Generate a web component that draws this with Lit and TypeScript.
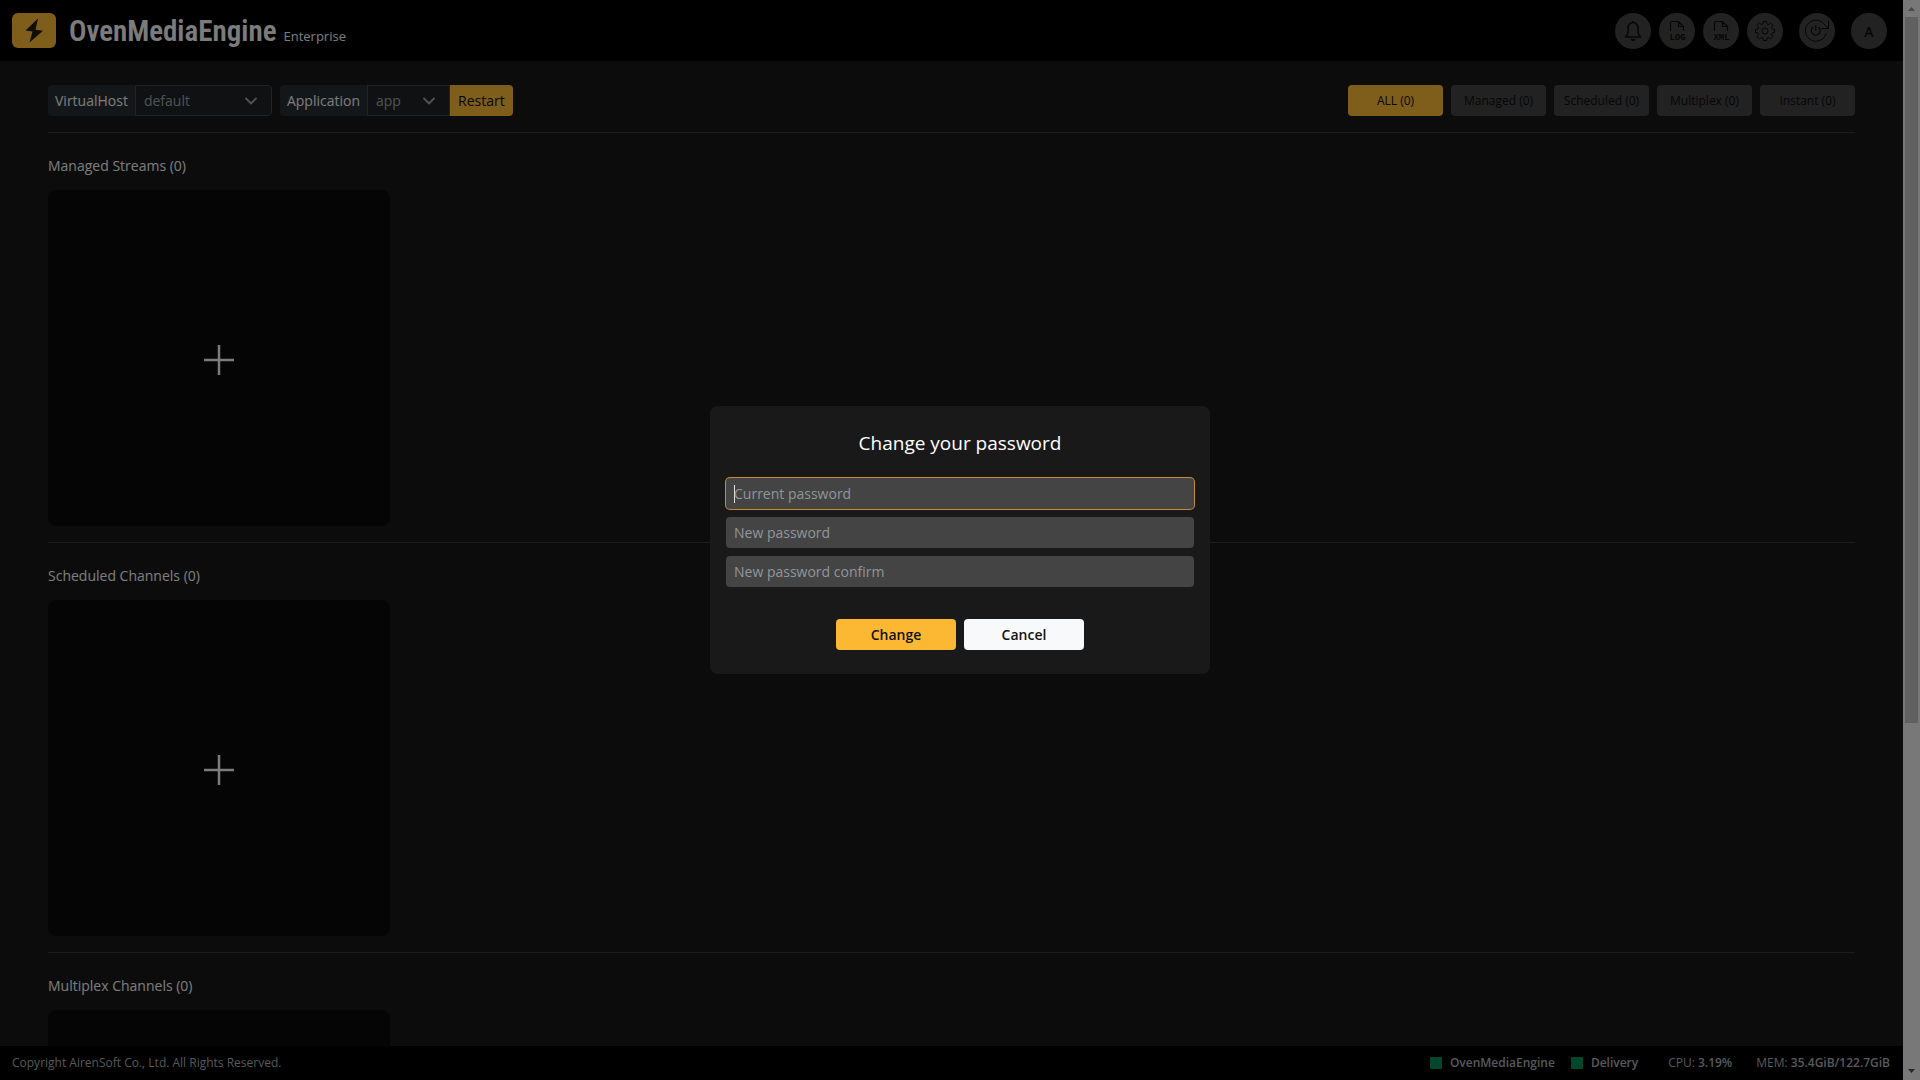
import { LitElement, html, css, TemplateResult } from "lit";
import { customElement, state } from "lit/decorators.js";
import { classMap } from "lit/directives/class-map.js";

const FILTERS = ["ALL", "Managed", "Scheduled", "Multiplex", "Instant"];
const SECTIONS = ["Managed Streams", "Scheduled Channels", "Multiplex Channels"];

const bellIcon = html`<svg class="icon" viewBox="0 0 36 36" aria-hidden="true">
  <path d="M10.500 24Q13 22 13 18.500V15A5 5.500 0 0 1 23 15V18.500Q23 22 25.500 24Z" fill="none" stroke="currentColor" stroke-width="1.500" stroke-linejoin="round" />
  <path d="M18 8V10" stroke="currentColor" stroke-width="1.500" />
  <path d="M15.500 26H20.500Q20 28 18 28T15.500 26Z" fill="currentColor" />
</svg>`;

const docIcon = (label: string) => html`<svg class="icon" viewBox="0 0 36 36" aria-hidden="true">
  <path d="M11.500 18V10Q11.500 8.500 13 8.500H19.500L24.500 13.500V18M19.500 8.500V13.500H24.500" fill="none" stroke="currentColor" stroke-width="1.200" />
  <text class="doc-label" x="18.500" y="27" text-anchor="middle" fill="currentColor">${label}</text>
</svg>`;

/* Outline of an eight-toothed gear centred in the 36-unit icon box. */
const gearPath = (() => {
  const pts: string[] = [];
  for (let i = 0; i < 8; i++) {
    const mid = (i * Math.PI) / 4;
    for (const [offset, r] of [[-0.27, 7.4], [-0.17, 9.7], [0.17, 9.7], [0.27, 7.4]]) {
      pts.push(`${(18 + r * Math.sin(mid + offset)).toFixed(2)} ${(18 - r * Math.cos(mid + offset)).toFixed(2)}`);
    }
  }
  return `M${pts.join("L")}Z`;
})();

const gearIcon = html`<svg class="icon" viewBox="0 0 36 36" aria-hidden="true">
  <path d=${gearPath} fill="none" stroke="currentColor" stroke-linejoin="round" />
  <circle cx="18" cy="18" r="3" fill="none" stroke="currentColor" />
</svg>`;

const restartIcon = html`<svg class="icon" viewBox="0 0 36 36" aria-hidden="true">
  <path d="M24.500 10.500A10.500 10.500 0 1 0 27 20.500M29.500 7.500V15.500H22.500M29.500 15.500L24.500 10.500" fill="none" stroke="currentColor" />
  <path d="M14 14A4.500 4.500 0 1 0 19.500 14M16.750 12V17.500" fill="none" stroke="currentColor" stroke-width="1.200" />
</svg>`;

const chevron = html`<svg class="chevron" viewBox="0 0 12 8" aria-hidden="true">
  <path d="M1 1.500L6 6.500L11 1.500" fill="none" stroke="currentColor" stroke-width="1.800" stroke-linecap="round" stroke-linejoin="round" />
</svg>`;

const ACTIONS: { label: string; icon: TemplateResult; apart?: boolean }[] = [
  { label: "Notifications", icon: bellIcon },
  { label: "Logs", icon: docIcon("LOG") },
  { label: "Configuration", icon: docIcon("XML") },
  { label: "Settings", icon: gearIcon },
  { label: "Restart server", icon: restartIcon, apart: true },
];

@customElement("app-root")
export class AppRoot extends LitElement {
  @state() private filter = "ALL";
  @state() private open = true;

  static styles = css`
    :host {
      display: block;
      --yellow: #ffba36;
      font: 14px/21px "Open Sans", "Noto Sans", sans-serif;
      color: #f8f9fa;
    }
    *, *::before { box-sizing: border-box; }
    button, input, select { font: inherit; margin: 0; }
    button { border: 0; padding: 0; cursor: pointer; }

    .shell { display: flex; height: 100vh; background: #181818; }
    .page { flex: 1; min-width: 0; display: flex; flex-direction: column; }

    .header {
      display: flex;
      justify-content: space-between;
      align-items: flex-start;
      padding: 13px 16px 11px 12px;
      background: #000;
    }
    .brand { display: flex; align-items: flex-start; color: inherit; text-decoration: none; }
    .logo { width: 44px; height: 35px; margin-right: 13px; }
    .wordmark { display: flex; align-items: baseline; gap: 7px; }
    .name { font: 600 29px/37px "Roboto Condensed", Roboto, sans-serif; }
    .edition { font-size: 13px; }

    .actions { display: flex; gap: 8px; }
    .round {
      width: 36px;
      height: 36px;
      border-radius: 50%;
      background: #444;
      color: #0c0c0c;
    }
    .apart { margin-left: 8px; }
    .avatar { font-size: 14px; font-weight: 600; color: #0c0c0c; }
    .icon { display: block; width: 36px; height: 36px; }
    .doc-label { font: 700 9px "Liberation Mono", monospace; }

    .content { flex: 1; min-height: 0; overflow: hidden; padding: 24px 48px 0; }
    .toolbar {
      display: flex;
      justify-content: space-between;
      padding-bottom: 16px;
      border-bottom: 1px solid #3a3a3a;
    }
    .group-row, .filters { display: flex; gap: 8px; }
    .group { display: flex; height: 31px; border-radius: 4px; overflow: hidden; }
    .group label { padding: 5px 7px; background: #292e33; }
    .picker { display: grid; align-items: center; }
    .picker > * { grid-area: 1 / 1; }
    .picker select {
      width: 100%;
      height: 31px;
      appearance: none;
      padding: 0 8px;
      border: 1px solid #43484d;
      border-radius: 0;
      background: #212325;
      color: #9fa5aa;
    }
    .host { width: 137px; }
    .host select { border-radius: 0 4px 4px 0; }
    .app { width: 83px; }
    .chevron {
      justify-self: end;
      width: 12px;
      height: 8px;
      margin-right: 15px;
      color: #a0a4a8;
      pointer-events: none;
    }
    .restart { padding: 0 8px; background: var(--yellow); color: #0c0c0c; }
    .filter {
      width: 95px;
      height: 31px;
      border-radius: 4px;
      background: #444;
      color: #0c0c0c;
      font-size: 12px;
    }
    .filter.on { background: var(--yellow); }

    .section { padding: 22px 0 16px; border-bottom: 1px solid #3a3a3a; }
    .section h2 { margin: 0 0 14px; font: inherit; }
    .grid { display: grid; grid-template-columns: repeat(5, 1fr); gap: 24px; }
    .add {
      display: grid;
      place-items: center;
      height: 336px;
      padding-top: 4px;
      border-radius: 8px;
      background: #0b0b0b;
      color: inherit;
    }
    .add svg { width: 30px; height: 30px; }

    .footer {
      display: flex;
      justify-content: space-between;
      align-items: center;
      height: 34px;
      padding: 0 13px 1px 12px;
      background: #000;
      color: #adb1b5;
      font-size: 12px;
    }
    .footer strong { font-weight: 600; }
    .status { display: flex; align-items: center; gap: 24px; }
    .services { display: flex; gap: 16px; margin-right: 6px; }
    .service { display: flex; align-items: center; gap: 8px; font-weight: 600; }
    .service::before {
      content: "";
      width: 12px;
      height: 12px;
      border-radius: 1px;
      background: #008f5d;
    }

    .scrollbar { width: 17px; display: flex; flex-direction: column; background: #f1f1f1; }
    .arrow { width: 17px; height: 17px; color: #909090; }
    .arrow.down { color: #505050; }
    .track { flex: 1; padding: 0 2px; }
    .thumb { height: 67.5%; background: #c1c1c1; }

    .backdrop {
      position: fixed;
      inset: 0;
      display: grid;
      place-items: center;
      background: rgba(0, 0, 0, 0.5);
    }
    .modal {
      width: 500px;
      padding: 24px 16px;
      border-radius: 8px;
      background: #191919;
    }
    .modal h1 {
      margin: 0 0 22px;
      font-size: 19px;
      font-weight: 400;
      line-height: 26px;
      text-align: center;
      color: #fff;
    }
    .fields { display: grid; gap: 8px; margin-bottom: 32px; }
    .fields input {
      width: 100%;
      height: 31px;
      padding: 0 8px;
      border: 0;
      border-radius: 4px;
      outline: 0;
      background: #444;
      color: #f8f9fa;
      line-height: 21px;
    }
    .fields input::placeholder { color: #90969c; opacity: 1; }
    .fields input:focus {
      box-shadow: 0 0 0 1px #c18f31;
      caret-color: transparent;
    }
    .fields input:placeholder-shown:focus {
      background: linear-gradient(#dee2e6, #dee2e6) 8px center / 1px 18px no-repeat #444;
    }
    .buttons { display: flex; justify-content: center; gap: 8px; }
    .buttons button {
      width: 120px;
      height: 31px;
      border-radius: 4px;
      background: #f8f9fa;
      color: #111;
      font-weight: 600;
    }
    .buttons .primary { background: #fdb833; }
  `;

  firstUpdated() {
    this.renderRoot.querySelector<HTMLInputElement>("#current")?.focus();
  }

  private close() {
    this.open = false;
  }

  private renderField(id: string, label: string) {
    return html`<input id=${id} type="password" aria-label=${label} placeholder=${label} />`;
  }

  private renderModal() {
    return html`<div class="backdrop">
      <form class="modal" role="dialog" aria-labelledby="title" @submit=${(e: Event) => e.preventDefault()}>
        <h1 id="title">Change your password</h1>
        <div class="fields">
          ${this.renderField("current", "Current password")}
          ${this.renderField("new", "New password")}
          ${this.renderField("confirm", "New password confirm")}
        </div>
        <div class="buttons">
          <button class="primary" type="submit">Change</button>
          <button type="button" @click=${this.close}>Cancel</button>
        </div>
      </form>
    </div>`;
  }

  render() {
    return html`
      <div class="shell">
        <div class="page">
          <header class="header">
            <a class="brand" href="#">
              <svg class="logo" viewBox="0 0 44 35" aria-hidden="true">
                <rect width="44" height="35" rx="6" fill="#ffba36" />
                <path d="M26 5.500L13.500 17.500L20.500 18.500L17.500 29.500L31 17.800L23.500 16.800Z" fill="#221c11" />
              </svg>
              <span class="wordmark">
                <span class="name">OvenMediaEngine</span>
                <span class="edition">Enterprise</span>
              </span>
            </a>
            <nav class="actions">
              ${ACTIONS.map(
                (a) => html`<button class=${classMap({ round: true, apart: !!a.apart })} aria-label=${a.label}>${a.icon}</button>`
              )}
              <button class="round apart avatar">A</button>
            </nav>
          </header>

          <main class="content">
            <div class="toolbar">
              <div class="group-row">
                <div class="group">
                  <label for="host">VirtualHost</label>
                  <div class="picker host">
                    <select id="host"><option>default</option></select>
                    ${chevron}
                  </div>
                </div>
                <div class="group">
                  <label for="app">Application</label>
                  <div class="picker app">
                    <select id="app"><option>app</option></select>
                    ${chevron}
                  </div>
                  <button class="restart">Restart</button>
                </div>
              </div>
              <div class="filters">
                ${FILTERS.map(
                  (f) => html`<button
                    class=${classMap({ filter: true, on: f === this.filter })}
                    @click=${() => (this.filter = f)}
                  >${f} (0)</button>`
                )}
              </div>
            </div>
            ${SECTIONS.map(
              (s) => html`<section class="section">
                <h2>${s} (0)</h2>
                <div class="grid">
                  <button class="add" aria-label="Add to ${s}">
                    <svg viewBox="0 0 30 30" aria-hidden="true">
                      <path d="M15 0V30M0 15H30" stroke="currentColor" stroke-width="2.500" />
                    </svg>
                  </button>
                </div>
              </section>`
            )}
          </main>

          <footer class="footer">
            <span>Copyright AirenSoft Co., Ltd. All Rights Reserved.</span>
            <div class="status">
              <div class="services">
                <span class="service">OvenMediaEngine</span>
                <span class="service">Delivery</span>
              </div>
              <span>CPU: <strong>3.19%</strong></span>
              <span>MEM: <strong>35.4GiB/122.7GiB</strong></span>
            </div>
          </footer>
        </div>

        <div class="scrollbar" aria-hidden="true">
          <svg class="arrow" viewBox="0 0 17 17"><path d="M5 11L8.500 7L12 11Z" fill="currentColor" /></svg>
          <div class="track"><div class="thumb"></div></div>
          <svg class="arrow down" viewBox="0 0 17 17"><path d="M5 6L8.500 10L12 6Z" fill="currentColor" /></svg>
        </div>
      </div>
      ${this.open ? this.renderModal() : null}
    `;
  }
}
